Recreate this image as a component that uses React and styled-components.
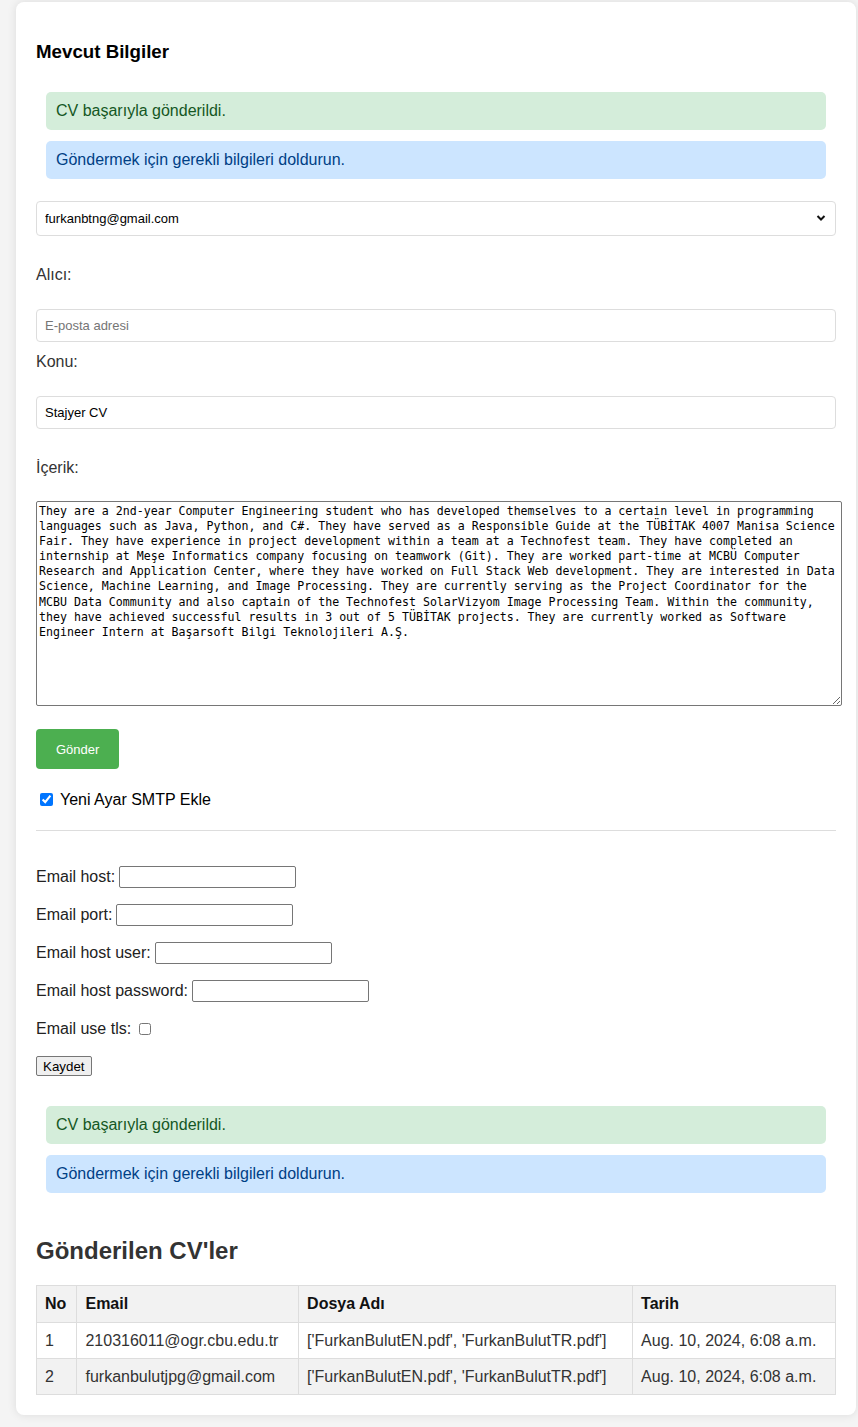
import React, { useState } from 'react'
import styled, { createGlobalStyle } from 'styled-components'

const GlobalStyle = createGlobalStyle`
  html, body {
    margin: 0;
    background: #f4f4f4;
    font-family: "Liberation Sans", Arial, sans-serif;
    color: #333;
  }
`

const Card = styled.div`
  margin: 2px 2px 13px 16px;
  padding: 20px;
  background: #fff;
  border-radius: 8px;
  box-shadow: 0 0 10px rgba(0, 0, 0, 0.1);
`

const Title = styled.h3`
  margin: 19px 0 0;
  font-size: 18.72px;
  line-height: 21px;
  font-weight: bold;
  color: #000;
`

const MessageList = styled.div`
  display: flex;
  flex-direction: column;
  gap: 11px;
  margin: 30px 0 22px;
  padding: 0 10px;
`

const alertColors = {
  success: { bg: '#d4edda', fg: '#155724' },
  info: { bg: '#cce5ff', fg: '#004085' },
}

const Alert = styled.div`
  padding: 10px;
  border-radius: 5px;
  font-size: 16px;
  line-height: 18px;
  background: ${(p) => alertColors[p.$variant].bg};
  color: ${(p) => alertColors[p.$variant].fg};
`

const SelectWrap = styled.div`
  position: relative;
`

const Select = styled.select`
  display: block;
  width: 100%;
  height: 35px;
  box-sizing: border-box;
  padding: 0 8px;
  border: 1px solid #ddd;
  border-radius: 4px;
  background: #fff;
  font-family: "Liberation Sans", Arial, sans-serif;
  font-size: 13px;
  color: #000;
  appearance: none;
`

const Chevron = styled.svg`
  position: absolute;
  right: 10px;
  top: 13px;
  pointer-events: none;
`

const FieldLabel = styled.label`
  display: block;
  font-size: 16px;
  line-height: 18px;
  color: #333;
  margin: ${(p) => p.$mt}px 0 ${(p) => p.$mb}px;
`

const TextInput = styled.input`
  display: block;
  width: 100%;
  height: 33px;
  box-sizing: border-box;
  padding: 0 8px;
  border: 1px solid #ddd;
  border-radius: 4px;
  font-family: "Liberation Sans", Arial, sans-serif;
  font-size: 13px;
  color: #000;
  &::placeholder {
    color: #757575;
  }
`

const Content = styled.textarea`
  display: block;
  width: 100%;
  height: 199px;
  padding: 2px;
  border: 1px solid #767676;
  border-radius: 2px;
  font-family: "DejaVu Sans Mono", "Liberation Mono", monospace;
  font-size: 11.6px;
  line-height: 15.1px;
  color: #000;
  background: #fff;
`

const SendButton = styled.button`
  display: block;
  margin-top: 23px;
  height: 40px;
  padding: 0 20px;
  border: none;
  border-radius: 4px;
  background: #4caf50;
  color: #fff;
  font-family: "Liberation Sans", Arial, sans-serif;
  font-size: 13px;
`

const CheckLine = styled.label`
  display: flex;
  align-items: center;
  margin-top: 21px;
  font-size: 16px;
  line-height: 18px;
  color: #000;
  input {
    margin: 3px 7px 3px 4px;
    width: 13px;
    height: 13px;
  }
`

const Divider = styled.hr`
  margin: 21px 0 35px;
  border: none;
  border-top: 1px solid #ddd;
`

const SmtpForm = styled.form`
  display: flex;
  flex-direction: column;
  align-items: flex-start;
  gap: 16px;
`

const SmtpRow = styled.label`
  display: flex;
  align-items: center;
  height: 22px;
  gap: 4px;
  font-size: 16px;
  color: #222;
  input[type='text'],
  input[type='password'] {
    width: 177px;
    height: 22px;
    box-sizing: border-box;
    border: 1px solid #767676;
    border-radius: 2px;
    padding: 1px 2px;
  }
  input[type='checkbox'] {
    margin: 0 0 0 4px;
    width: 12px;
    height: 12px;
  }
`

const SaveButton = styled.button`
  height: 20px;
  padding: 0 6px;
  border: 1px solid #767676;
  border-radius: 2px;
  background: #efefef;
  font-family: "Liberation Sans", Arial, sans-serif;
  font-size: 13.33px;
  color: #000;
`

const SectionTitle = styled.h2`
  margin: 44px 0 20px;
  font-size: 24px;
  line-height: 28px;
  color: #333;
`

const Table = styled.table`
  width: 100%;
  border-collapse: collapse;
  font-size: 16px;
  th,
  td {
    border: 1px solid #ddd;
    padding: 8px;
    text-align: left;
    line-height: 19px;
  }
  th {
    background: #f2f2f2;
    color: #111;
    line-height: 20px;
  }
  tbody tr:nth-child(even) {
    background: #f2f2f2;
  }
`

const cvText =
  "They are a 2nd-year Computer Engineering student who has developed themselves to a certain level in programming languages such as Java, Python, and C#. They have served as a Responsible Guide at the TÜBİTAK 4007 Manisa Science Fair. They have experience in project development within a team at a Technofest team. They have completed an internship at Meşe Informatics company focusing on teamwork (Git). They are worked part-time at MCBÜ Computer Research and Application Center, where they have worked on Full Stack Web development. They are interested in Data Science, Machine Learning, and Image Processing. They are currently serving as the Project Coordinator for the MCBU Data Community and also captain of the Technofest SolarVizyom Image Processing Team. Within the community, they have achieved successful results in 3 out of 5 TÜBİTAK projects. They are currently worked as Software Engineer Intern at Başarsoft Bilgi Teknolojileri A.Ş."

const sentCvs = [
  { no: 1, email: '210316011@ogr.cbu.edu.tr', files: "['FurkanBulutEN.pdf', 'FurkanBulutTR.pdf']", date: 'Aug. 10, 2024, 6:08 a.m.' },
  { no: 2, email: 'furkanbulutjpg@gmail.com', files: "['FurkanBulutEN.pdf', 'FurkanBulutTR.pdf']", date: 'Aug. 10, 2024, 6:08 a.m.' },
]

const Messages = () => (
  <MessageList>
    <Alert $variant="success">CV başarıyla gönderildi.</Alert>
    <Alert $variant="info">Göndermek için gerekli bilgileri doldurun.</Alert>
  </MessageList>
)

const App = () => {
  const [newSmtp, setNewSmtp] = useState(true)
  const [subject, setSubject] = useState('Stajyer CV')
  const [body, setBody] = useState(cvText)

  return (
    <>
      <GlobalStyle />
      <Card>
        <Title>Mevcut Bilgiler</Title>
        <Messages />

        <SelectWrap>
          <Select defaultValue="furkanbtng@gmail.com">
            <option>furkanbtng@gmail.com</option>
          </Select>
          <Chevron width="10" height="8" viewBox="0 0 10 8">
            <polyline points="1.5,2 5,5.5 8.5,2" fill="none" stroke="#111" strokeWidth="2" />
          </Chevron>
        </SelectWrap>

        <FieldLabel $mt={30} $mb={25} htmlFor="to">Alıcı:</FieldLabel>
        <TextInput id="to" type="email" placeholder="E-posta adresi" />

        <FieldLabel $mt={11} $mb={25} htmlFor="subject">Konu:</FieldLabel>
        <TextInput id="subject" value={subject} onChange={(e) => setSubject(e.target.value)} />

        <FieldLabel $mt={30} $mb={24} htmlFor="body">İçerik:</FieldLabel>
        <Content id="body" value={body} onChange={(e) => setBody(e.target.value)} />

        <SendButton type="button">Gönder</SendButton>

        <CheckLine>
          <input type="checkbox" checked={newSmtp} onChange={(e) => setNewSmtp(e.target.checked)} />
          Yeni Ayar SMTP Ekle
        </CheckLine>

        <Divider />

        <SmtpForm onSubmit={(e) => e.preventDefault()}>
          <SmtpRow>Email host: <input type="text" /></SmtpRow>
          <SmtpRow>Email port: <input type="text" /></SmtpRow>
          <SmtpRow>Email host user: <input type="text" /></SmtpRow>
          <SmtpRow>Email host password: <input type="password" /></SmtpRow>
          <SmtpRow>Email use tls: <input type="checkbox" /></SmtpRow>
          <SaveButton type="submit">Kaydet</SaveButton>
        </SmtpForm>

        <Messages />

        <SectionTitle>Gönderilen CV'ler</SectionTitle>
        <Table>
          <thead>
            <tr>
              <th>No</th>
              <th>Email</th>
              <th>Dosya Adı</th>
              <th>Tarih</th>
            </tr>
          </thead>
          <tbody>
            {sentCvs.map((cv) => (
              <tr key={cv.no}>
                <td>{cv.no}</td>
                <td>{cv.email}</td>
                <td>{cv.files}</td>
                <td>{cv.date}</td>
              </tr>
            ))}
          </tbody>
        </Table>
      </Card>
    </>
  )
}

export default App
